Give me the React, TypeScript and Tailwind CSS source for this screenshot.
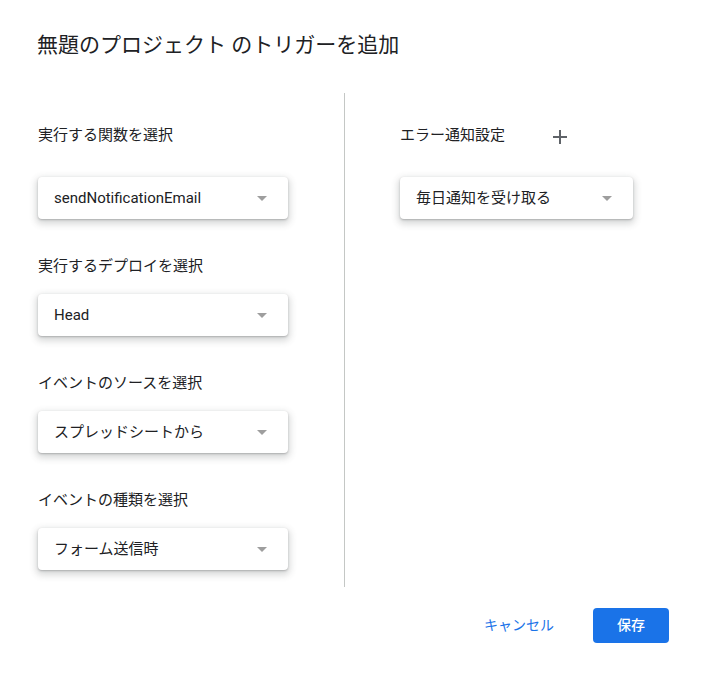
import React from 'react';

const font = { fontFamily: 'Roboto, "Noto Sans CJK JP", sans-serif' };

function SelectBox({ value, width }: { value: string; width: string }) {
  return (
    <div
      className={`${width} h-[42px] flex items-center justify-between pl-4 pr-[21px] bg-white rounded-[4px] shadow-[0_1px_2px_rgba(60,64,67,0.3),0_3px_7px_2px_rgba(60,64,67,0.2)]`}
    >
      <span className="text-[15px] text-[#202124]">{value}</span>
      <span className="w-0 h-0 border-l-[5px] border-r-[5px] border-t-[5px] border-l-transparent border-r-transparent border-t-[#9e9e9e]" />
    </div>
  );
}

function Field({ label, value, first }: { label: string; value: string; first?: boolean }) {
  return (
    <div className={first ? 'pt-[32px]' : 'pt-[37px]'}>
      <div className="h-5 leading-5 text-[15px] text-[#202124]">{label}</div>
      <div className={first ? 'pt-[32px]' : 'pt-[18px]'}>
        <SelectBox value={value} width="w-[250px]" />
      </div>
    </div>
  );
}

export default function App() {
  return (
    <div className="w-[705px] h-[676px] bg-white relative" style={font}>
      <h1 className="pl-[37px] pt-[31px] h-[93px] text-[21px] leading-7 text-[#202124]">
        無題のプロジェクト のトリガーを追加
      </h1>

      <div className="flex">
        <div className="w-[344px] shrink-0 pl-[38px] h-[494px]">
          <Field first label="実行する関数を選択" value="sendNotificationEmail" />
          <Field label="実行するデプロイを選択" value="Head" />
          <Field label="イベントのソースを選択" value="スプレッドシートから" />
          <Field label="イベントの種類を選択" value="フォーム送信時" />
        </div>
        <div className="w-px shrink-0 h-[494px] bg-[#c4c7c5]" />
        <div className="pl-[55px]">
          <div className="pt-[32px]">
            <div className="h-5 flex items-center">
              <span className="leading-5 text-[15px] text-[#202124]">エラー通知設定</span>
              <svg className="ml-[48px] mt-1" width="14" height="14" viewBox="0 0 14 14">
                <path d="M7 0v14M0 7h14" stroke="#5f6368" strokeWidth="2" fill="none" />
              </svg>
            </div>
          </div>
          <div className="pt-[32px]">
            <SelectBox value="毎日通知を受け取る" width="w-[233px]" />
          </div>
        </div>
      </div>

      <div className="flex justify-end items-center pr-[36px] pt-[21px] gap-[39px]">
        <button className="text-[14px] text-[#1a73e8]">キャンセル</button>
        <button className="w-[76px] h-[35px] rounded-[4px] bg-[#1a73e8] text-white text-[14px] font-medium">
          保存
        </button>
      </div>
    </div>
  );
}
